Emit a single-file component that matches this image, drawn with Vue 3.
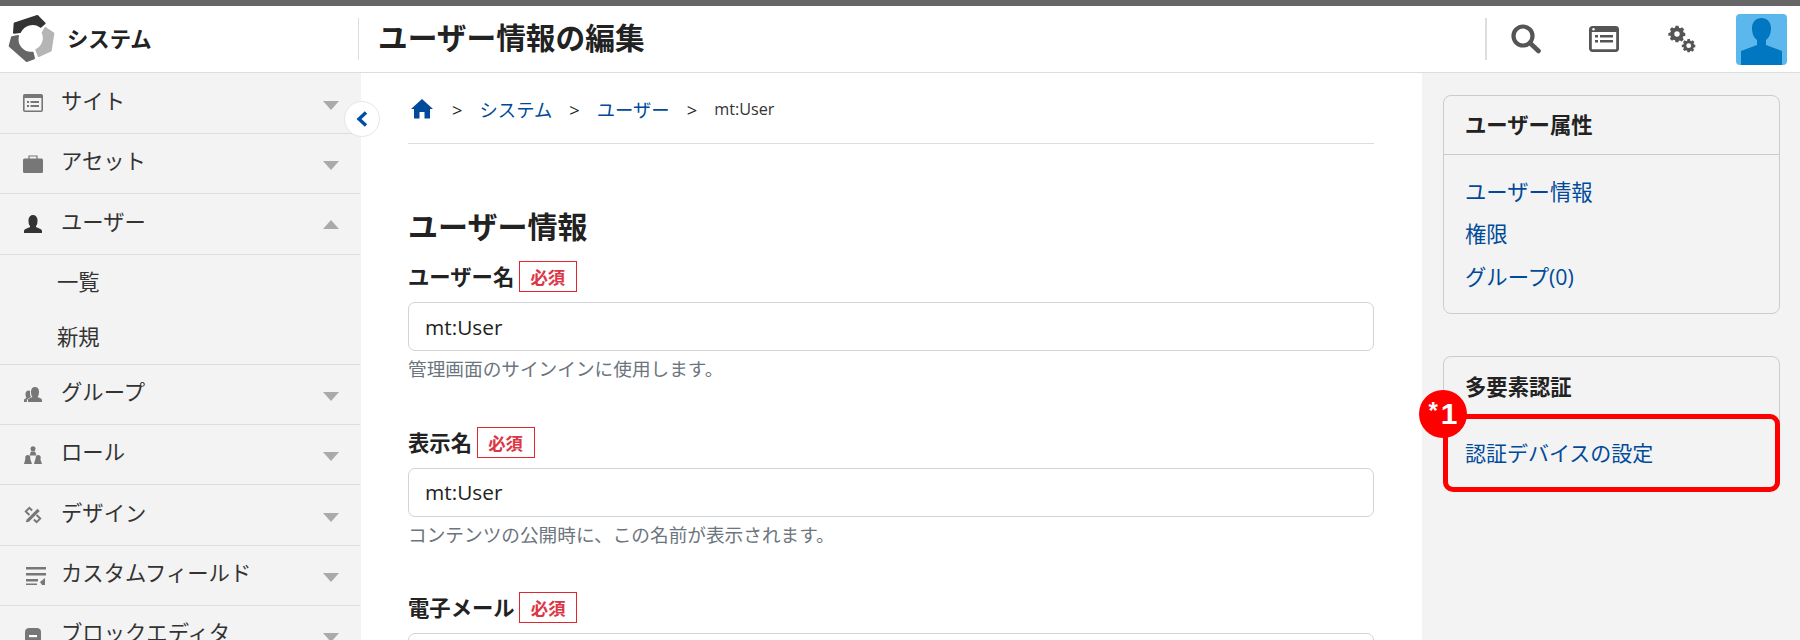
<script setup>
const nav = [
  { label: 'サイト', icon: 'site', h: 61 },
  { label: 'アセット', icon: 'asset', h: 60 },
  { label: 'ユーザー', icon: 'user', h: 61, open: true, sub: ['一覧', '新規'] },
  { label: 'グループ', icon: 'group', h: 60 },
  { label: 'ロール', icon: 'role', h: 60 },
  { label: 'デザイン', icon: 'design', h: 61 },
  { label: 'カスタムフィールド', icon: 'field', h: 60 },
  { label: 'ブロックエディタ', icon: 'block', h: 60 }
]
const fields = [
  { label: 'ユーザー名', value: 'mt:User', help: '管理画面のサインインに使用します。' },
  { label: '表示名', value: 'mt:User', help: 'コンテンツの公開時に、この名前が表示されます。' },
  { label: '電子メール', value: '', help: '' }
]
const gear = 'M10 1h4l.6 2.600 1.800.8L18.700 3l2.800 2.800-1.400 2.300.8 1.800L23 10.500v4l-2.600.6-.8 1.800 1.400 2.300-2.800 2.800-2.300-1.400-1.800.8L14 23h-4l-.6-2.600-1.800-.8L5.300 21l-2.800-2.800 1.400-2.300-.8-1.800L.5 14.500v-4l2.600-.6.8-1.800L2.500 5.800 5.300 3l2.300 1.400 1.800-.8z'
</script>

<template>
  <div class="page">
    <header class="top">
      <div class="brand">
        <svg class="logo" viewBox="0 0 180 168">
          <g stroke-width="6" stroke-linejoin="round">
            <path d="M32 40 100 18 122 40 110 50A42 42 0 0 0 48 66L30 68Z" fill="#333" stroke="#333" />
            <path d="M124 54 148 70 140 122 104 138 97 120A40 40 0 0 0 116 68Z" fill="#b5b5b5" stroke="#b5b5b5" />
            <path d="M24 82 42 78A40 40 0 0 0 86 128L90 145 68 153 17 108Z" fill="#666" stroke="#666" />
          </g>
        </svg>
        <span class="brand-name">システム</span>
      </div>
      <div class="title-wrap"><h1>ユーザー情報の編集</h1></div>
      <div class="tools">
        <svg class="search" viewBox="0 0 30 30"><circle cx="12" cy="12" r="9.500" fill="none" stroke="#555" stroke-width="4.200" /><path d="M19 19l8.500 8" stroke="#555" stroke-width="4.600" stroke-linecap="round" /></svg>
        <svg class="tool-site" viewBox="0 0 30 26"><rect x="1.400" y="1.400" width="27.200" height="23.200" rx="2" fill="none" stroke="#555" stroke-width="2.800" /><rect x="1" y="1" width="28" height="5" fill="#555" /><circle cx="4.500" cy="3.300" r="1.200" fill="#fff" /><path d="M6 9h3v2.500H6zM11 9h13v2.500H11zM6 14h3v2.500H6zM11 14h13v2.500H11z" fill="#555" /></svg>
        <svg class="gears" viewBox="0 0 28 28">
          <g transform="scale(.75)"><path :d="gear" fill="#555" /><circle cx="12" cy="12" r="3.600" fill="#fff" /></g>
          <g transform="translate(13.500 13.500) scale(.6)"><path :d="gear" fill="#555" /><circle cx="12" cy="12" r="4" fill="#fff" /></g>
        </svg>
        <div class="avatar">
          <svg viewBox="0 0 51 51"><path d="M5 51V37l16-6v-5c-4-3-5-8-5-12 0-6 4-10 9.500-10S35 8 35 14c0 4-1 9-5 12v5l16 6v14z" fill="#0077c0" /></svg>
        </div>
      </div>
    </header>

    <div class="body">
      <aside class="side">
        <ul class="nav">
          <li v-for="item in nav" :key="item.label" class="nav-group">
            <div class="nav-item" :style="{ height: item.h + 'px' }">
              <span class="nav-icon">
                <svg v-if="item.icon === 'site'" viewBox="0 0 20 18" class="ico"><rect x=".8" y=".8" width="18.400" height="16.400" rx="1" fill="none" stroke="#777" stroke-width="1.600" /><rect x="1" y="1" width="18" height="3" fill="#777" /><path d="M4 7h2v2H4zM7.500 7H16v2H7.500zM4 11h2v2H4zM7.500 11H16v2H7.500z" fill="#777" /></svg>
                <svg v-else-if="item.icon === 'asset'" viewBox="0 0 20 18" class="ico"><path d="M6 4V1h8v3" fill="none" stroke="#777" stroke-width="1.200" /><rect y="3.500" width="20" height="14.500" rx="1.500" fill="#777" /></svg>
                <svg v-else-if="item.icon === 'user'" viewBox="0 0 20 18" class="ico"><path d="M1 18v-2c0-2 4-3 6-4v-1C5.500 9.500 5.500 7 5.500 5 5.500 2 7.500 0 10 0s4.500 2 4.500 5c0 2 0 4.500-1.500 6v1c2 1 6 2 6 4v2z" fill="#333" /></svg>
                <svg v-else-if="item.icon === 'group'" viewBox="0 0 20 18" class="ico"><path d="M5 16v-2c0-1.500 3-2.200 4.500-3C8.300 9.800 8 8 8 5.500 8 3 9.500 1 12 1s4 2 4 4.500c0 2.500-.3 4.300-1.500 5.500 1.500.8 4.500 1.500 4.500 3v2z" fill="#777" /><path d="M1 16v-2c0-1 1.500-1.500 2.500-2C3 11 2.500 10 2.500 8 2.500 6 3.800 4.500 5.500 4.500c.8 0 1.300.2 1.700.6C6.800 8 7 9.500 8 11 6 12 3.800 13 3.800 16z" fill="#777" /></svg>
                <svg v-else-if="item.icon === 'role'" viewBox="0 0 20 18" class="ico"><g fill="#777"><circle cx="10" cy="2.800" r="2.500" /><path d="M6.500 9.500 8 5.500h4l1.500 4z" /><circle cx="4.800" cy="11.500" r="2.500" /><path d="M1 18l1.500-5.500h4.600L9 18z" /><circle cx="15.200" cy="11.500" r="2.500" /><path d="M11 18l1.500-5.500h4.600L19 18z" /></g></svg>
                <svg v-else-if="item.icon === 'design'" viewBox="0 0 20 20" class="ico"><g fill="none" stroke="#777" stroke-width="2.200"><path d="M6 10 2 6 6 2 9 5M14 10l4 4-4 4-3-3" /></g><path d="M3 15 15 3l2.500 2.500L5.500 17.500 2 18z" fill="#777" /></svg>
                <svg v-else-if="item.icon === 'field'" viewBox="0 0 20 18" class="ico ico-field"><path d="M0 0h20v2.400H0zM0 6h20v2.400H0zM0 12h12v2.400H0zM0 16.500h11V18H0zM14 15l5-4v7h-3z" fill="#777" /></svg>
                <svg v-else viewBox="0 0 20 18" class="ico ico-block"><path d="M2 5C2 2 4 1 6 1h8c2 0 4 1 4 4v13H2z" fill="#777" /><rect x="6" y="8" width="8" height="2.200" fill="#fff" /></svg>
              </span>
              <span class="nav-label">{{ item.label }}</span>
              <span class="caret" :class="{ up: item.open }"></span>
            </div>
            <ul v-if="item.sub" class="sub">
              <li v-for="s in item.sub" :key="s">{{ s }}</li>
            </ul>
          </li>
        </ul>
        <button class="collapse" aria-label="collapse">
          <svg viewBox="0 0 12 16"><path d="M10 1.500 3 8l7 6.500" fill="none" stroke="#004ea2" stroke-width="3.400" /></svg>
        </button>
      </aside>

      <main class="main">
        <nav class="crumbs">
          <svg class="home" viewBox="0 0 22 20"><path d="M11 0 0 10h3v9.500h5.500V13h5v6.500H19V10h3z" fill="#004a99" /></svg>
          <span class="sep">&gt;</span>
          <a>システム</a>
          <span class="sep">&gt;</span>
          <a>ユーザー</a>
          <span class="sep">&gt;</span>
          <span class="cur">mt:User</span>
        </nav>
        <h2>ユーザー情報</h2>
        <section v-for="f in fields" :key="f.label" class="field">
          <div class="label-row">
            <label>{{ f.label }}</label>
            <span class="req">必須</span>
          </div>
          <div class="input">{{ f.value }}</div>
          <p v-if="f.help" class="help">{{ f.help }}</p>
        </section>
      </main>

      <aside class="right">
        <div class="card">
          <h3 class="card-head">ユーザー属性</h3>
          <div class="card-links">
            <a>ユーザー情報</a>
            <a>権限</a>
            <a>グループ(0)</a>
          </div>
        </div>
        <div class="card second">
          <h3 class="card-head plain">多要素認証</h3>
          <div class="card-links single"><a>認証デバイスの設定</a></div>
          <div class="highlight"></div>
          <div class="badge"><span class="star">*</span>1</div>
        </div>
      </aside>
    </div>
  </div>
</template>

<style>
html, body { margin: 0; background: #fff; overflow: hidden; }
</style>

<style scoped>
.page {
  width: 1800px;
  height: 640px;
  overflow: hidden;
  display: flex;
  flex-direction: column;
  font-family: "Open Sans", "Noto Sans CJK JP", sans-serif;
  color: #222;
  border-top: 6px solid #666;
  box-sizing: border-box;
}
ul { list-style: none; margin: 0; padding: 0; }
h1, h2, h3, p { margin: 0; }

.top {
  height: 67px;
  flex: none;
  box-sizing: border-box;
  border-bottom: 1px solid #ddd;
  display: flex;
  align-items: center;
}
.brand { width: 358px; display: flex; align-items: center; box-sizing: border-box; padding-left: 4px; flex: none; }
.logo { width: 60px; height: 56px; margin-top: -2px; }
.brand-name { margin-left: 3px; margin-bottom: 4px; font-size: 21.330px; font-weight: 700; color: #222; }
.title-wrap {
  flex: 1;
  height: 42px;
  border-left: 1px solid #ddd;
  padding-left: 19px;
  display: flex;
  align-items: center;
}
h1 { font-size: 29.700px; font-weight: 700; color: #222; margin-bottom: 5px; }
.tools {
  height: 42px;
  width: 315px;
  box-sizing: border-box;
  border-left: 2px solid #ddd;
  display: flex;
  align-items: center;
  position: relative;
  flex: none;
}
.search { width: 30px; height: 30px; margin-left: 24px; flex: none; }
.tool-site { width: 30px; height: 26px; margin-left: 48px; flex: none; }
.gears { width: 28px; height: 28px; margin-left: 49px; flex: none; }
.avatar { width: 51px; height: 51px; margin-left: 40px; border-radius: 4px; background: #5cb8ec; overflow: hidden; flex: none; }
.avatar svg { width: 51px; height: 51px; display: block; }

.body { flex: 1; display: flex; min-height: 0; }
.side { width: 361px; flex: none; background: #f3f3f3; position: relative; }
.nav-item {
  box-sizing: border-box;
  border-bottom: 1px solid #ddd;
  display: flex;
  align-items: center;
  padding-left: 23px;
  width: 360px;
  padding-bottom: 4px;
}
.nav-icon { width: 20px; height: 18px; display: block; flex: none; margin-top: 4px; }
.ico { width: 20px; height: 18px; display: block; }
.ico-field { margin-left: 3px; }
.nav-label { margin-left: 18px; margin-bottom: 4px; font-size: 21.330px; color: #333; flex: 1; }
.caret {
  width: 0; height: 0;
  margin-right: 21px;
  margin-top: 8px;
  border-left: 8px solid transparent;
  border-right: 8px solid transparent;
  border-top: 9px solid #aaa;
}
.caret.up { border-top: 0; border-bottom: 9px solid #aaa; margin-top: 4px; }
.sub { border-bottom: 1px solid #ddd; height: 110px; box-sizing: border-box; width: 360px; }
.sub li { height: 55px; box-sizing: border-box; padding-bottom: 4px; display: flex; align-items: center; padding-left: 57px; font-size: 21.330px; color: #333; }
.collapse {
  position: absolute;
  top: 28px; right: -19px;
  width: 36px; height: 36px;
  border-radius: 50%;
  background: #fff;
  border: 1px solid #e6e6e6;
  padding: 0;
  display: flex;
  align-items: center;
  justify-content: center;
}
.collapse svg { width: 12px; height: 16px; }

.main { flex: 1; padding: 0 48px 0 47px; min-width: 0; }
.crumbs {
  height: 71px;
  box-sizing: border-box;
  border-bottom: 1px solid #ddd;
  display: flex;
  align-items: center;
  font-size: 18.330px;
  padding-left: 3px;
  padding-top: 2px;
}
.home { width: 22px; height: 20px; flex: none; }
.sep { margin: 0 17px; color: #222; }
.crumbs svg + .sep { margin-left: 19px; }
.crumbs a { color: #004a99; }
.cur { color: #333; font-size: 16.200px; }
h2 { font-size: 30px; font-weight: 700; margin-top: 62px; margin-bottom: 13px; line-height: 42px; }
.field { margin-bottom: 40.500px; }
.label-row { display: flex; align-items: center; height: 31px; }
label { font-size: 21.330px; font-weight: 700; color: #222; margin-bottom: 2px; }
.req {
  margin-left: 4.500px;
  width: 58px; height: 31px;
  box-sizing: border-box;
  border: 1px solid #e0272e;
  color: #dc3545;
  font-size: 17.330px;
  font-weight: 700;
  display: flex;
  align-items: center;
  justify-content: center;
}
.input {
  margin-top: 10px;
  height: 49px;
  box-sizing: border-box;
  border: 1px solid #ced4da;
  border-radius: 7px;
  padding: 0 16px;
  display: flex;
  align-items: center;
  font-size: 20.800px;
  color: #222;
}
.help { font-size: 18.670px; color: #6c757d; margin-top: 2px; padding-bottom: 2px; line-height: 31px; }

.right { width: 378px; flex: none; background: #f3f3f3; padding: 22px 0 0 21px; box-sizing: border-box; }
.card {
  width: 337px;
  height: 219px;
  box-sizing: border-box;
  border: 1px solid #ccc;
  border-radius: 8px;
  position: relative;
}
.card.second { height: 135px; margin-top: 42px; }
.card-head {
  height: 59px;
  box-sizing: border-box;
  border-bottom: 1px solid #ccc;
  padding: 0 0 3px 21px;
  display: flex;
  align-items: center;
  font-size: 21.330px;
  font-weight: 700;
  color: #222;
}
.card-head.plain { border-bottom: 0; }
.card-links { display: flex; flex-direction: column; padding: 21.500px 21px 0; gap: 12.500px; font-size: 21.330px; color: #004a99; }
.card-links a { line-height: 30px; display: block; }
.card-links.single { padding-top: 22px; font-size: 21px; }
.highlight {
  position: absolute;
  left: -1px; top: 57px;
  width: 337px;
  height: 78px;
  box-sizing: border-box;
  border: 5px solid #f00;
  border-radius: 10px;
}
.badge {
  position: absolute;
  left: -25px; top: 33px;
  width: 48px; height: 48px;
  border-radius: 50%;
  background: #f00;
  color: #fff;
  font-size: 30px;
  font-weight: 700;
  display: flex;
  align-items: center;
  justify-content: center;
  font-family: "Liberation Sans", sans-serif;
}
.star { font-size: 24px; margin-top: -6px; margin-right: 3px; }
</style>
